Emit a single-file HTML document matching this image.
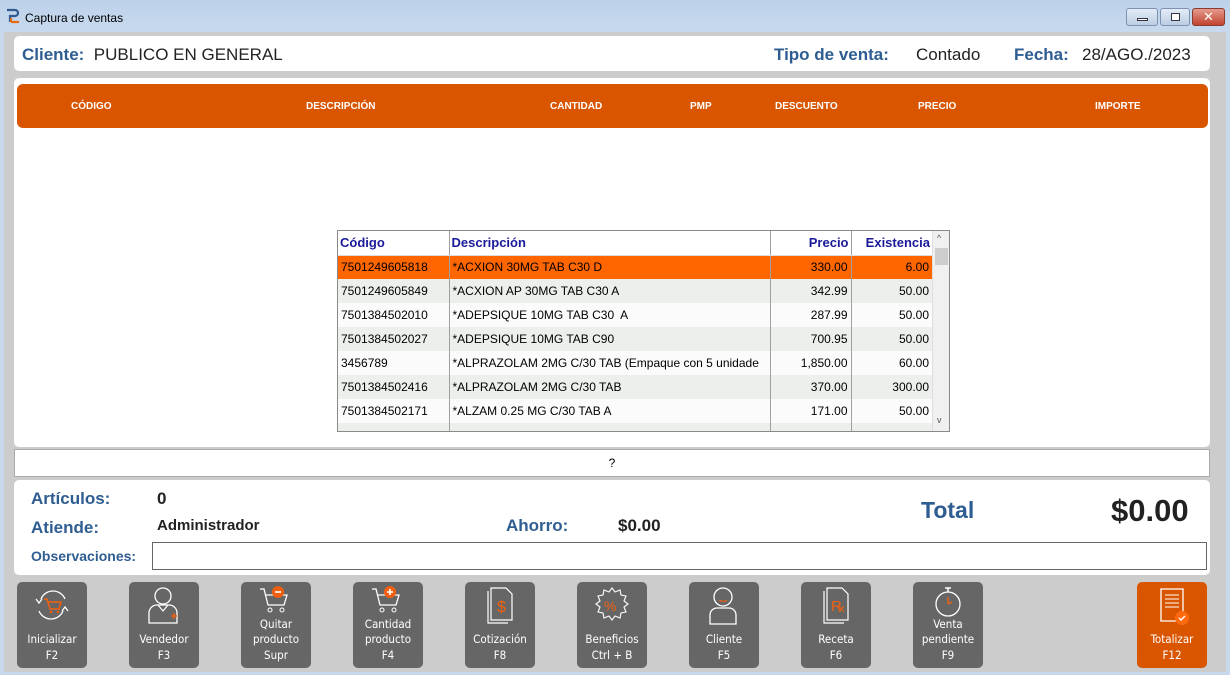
<!DOCTYPE html>
<html><head><meta charset="utf-8"><style>
*{margin:0;padding:0;box-sizing:border-box}
body{width:1230px;height:675px;overflow:hidden;background:#c9d9ec;font-family:"Liberation Sans","DejaVu Sans",sans-serif;position:relative}
.abs{position:absolute}
.title{left:0;top:0;width:1230px;height:36px;background:linear-gradient(#bcd2ea,#c9daee)}
.gray{left:4px;top:32px;width:1222px;height:640px;background:#cccccc}
.panel{background:#fff;border-radius:5px}
.lbl{color:#2e5d92;font-weight:bold}
.hdr{left:17px;top:84px;width:1191px;height:44px;background:#d95500;border-radius:6px;color:#fff;font-size:10px;font-weight:bold}
.hdr span{position:absolute;top:17px}
table{border-collapse:collapse;font-size:12px}
.tb{left:337px;top:230px;width:613px;height:202px;border:1px solid #8a8a8a;background:#ecefec;overflow:hidden}
.tb td{height:24px;padding:0 3px;border-left:1px solid #a0a0a0;white-space:nowrap;overflow:hidden}
.tb td:first-child{border-left:none}
.tb th{height:24px;color:#1a1a9a;font-size:13px;text-align:left;padding:0 2px;border-left:1px solid #a0a0a0;background:#fff;border-bottom:1px solid #ddd}
.tb th:first-child{border-left:none}
.tb .r{text-align:right}
.btn{position:absolute;top:582px;width:70px;height:86px;background:#666;border-radius:5px;color:#fff;font-family:"DejaVu Sans Condensed","Liberation Sans Narrow","Liberation Sans",sans-serif;font-size:11.5px;text-align:center}
.btn .t{position:absolute;left:0;right:0;bottom:5px;line-height:15.5px}
.btn svg{position:absolute;left:15px;top:3px}
</style></head><body>
<div class="abs title"></div>
<svg class="abs" style="left:5px;top:8px" width="16" height="16" viewBox="0 0 16 16"><path d="M2 2h8a3 3 0 0 1 0 6H5v6" fill="none" stroke="#2f5b91" stroke-width="2.2"/><path d="M6 14h8" stroke="#e86a10" stroke-width="2.2"/><path d="M6 10v4" stroke="#e86a10" stroke-width="2.2"/></svg>
<div class="abs" style="left:25px;top:11px;font-size:12px;color:#000">Captura de ventas</div>
<div class="abs" style="left:1126px;top:8px;width:32px;height:18px;border:1px solid #7c92b0;border-radius:3px;background:linear-gradient(#e3ecf7,#bccde3)"><div class="abs" style="left:10px;top:9px;width:11px;height:3px;background:#fff;border:1px solid #334"></div></div>
<div class="abs" style="left:1160px;top:8px;width:30px;height:18px;border:1px solid #7c92b0;border-radius:3px;background:linear-gradient(#e3ecf7,#bccde3)"><div class="abs" style="left:10px;top:4px;width:9px;height:8px;border:1px solid #334;background:#fff"></div></div>
<div class="abs" style="left:1192px;top:8px;width:33px;height:18px;border:1px solid #8b3a30;border-radius:3px;background:linear-gradient(#e59a8c,#c1432f);color:#fff;font-weight:bold;font-size:13px;text-align:center;line-height:16px">✕</div>
<div class="abs gray"></div>
<div class="abs panel" style="left:14px;top:36px;width:1196px;height:35px"></div>
<div class="abs" style="left:22px;top:45px;font-size:17px"><span class="lbl">Cliente:</span>&nbsp;&nbsp;<span style="color:#222">PUBLICO EN GENERAL</span></div>
<div class="abs lbl" style="left:774px;top:45px;font-size:17px">Tipo de venta:</div>
<div class="abs" style="left:916px;top:45px;font-size:17px;color:#222">Contado</div>
<div class="abs lbl" style="left:1014px;top:45px;font-size:17px">Fecha:</div>
<div class="abs" style="left:1082px;top:45px;font-size:17px;color:#222">28/AGO./2023</div>
<div class="abs panel" style="left:14px;top:78px;width:1196px;height:369px"></div>
<div class="abs hdr"><span style="left:54px">CÓDIGO</span><span style="left:289px">DESCRIPCIÓN</span><span style="left:533px">CANTIDAD</span><span style="left:673px">PMP</span><span style="left:758px">DESCUENTO</span><span style="left:901px">PRECIO</span><span style="left:1078px">IMPORTE</span></div>
<div class="abs tb">
<table style="width:594px;table-layout:fixed">
<colgroup><col style="width:111px"><col style="width:321px"><col style="width:81px"><col style="width:81px"></colgroup>
<tr><th>Código</th><th>Descripción</th><th class="r">Precio</th><th class="r">Existencia</th></tr>
<tr style="background:#ff6600"><td>7501249605818</td><td>*ACXION 30MG TAB C30 D</td><td class="r">330.00</td><td class="r">6.00</td></tr>
<tr style="background:#ecefec"><td>7501249605849</td><td>*ACXION AP 30MG TAB C30 A</td><td class="r">342.99</td><td class="r">50.00</td></tr>
<tr style="background:#fcfbfb"><td>7501384502010</td><td>*ADEPSIQUE 10MG TAB C30&nbsp; A</td><td class="r">287.99</td><td class="r">50.00</td></tr>
<tr style="background:#ecefec"><td>7501384502027</td><td>*ADEPSIQUE 10MG TAB C90</td><td class="r">700.95</td><td class="r">50.00</td></tr>
<tr style="background:#fcfbfb"><td>3456789</td><td>*ALPRAZOLAM 2MG C/30 TAB (Empaque con 5 unidade</td><td class="r">1,850.00</td><td class="r">60.00</td></tr>
<tr style="background:#ecefec"><td>7501384502416</td><td>*ALPRAZOLAM 2MG C/30 TAB</td><td class="r">370.00</td><td class="r">300.00</td></tr>
<tr style="background:#fcfbfb"><td>7501384502171</td><td>*ALZAM 0.25 MG C/30 TAB A</td><td class="r">171.00</td><td class="r">50.00</td></tr>
<tr style="background:#ecefec"><td></td><td></td><td></td><td></td></tr>
</table>
<div class="abs" style="left:594px;top:0;width:18px;height:200px;background:#f0f0f0;border-left:1px solid #ddd"><div class="abs" style="left:4px;top:2px;font-size:9px;color:#555">^</div><div class="abs" style="left:2px;top:17px;width:13px;height:17px;background:#cdcdcd"></div><div class="abs" style="left:4px;top:184px;font-size:9px;color:#555">v</div></div>
</div>
<div class="abs" style="left:14px;top:449px;width:1196px;height:28px;background:#fff;border:1px solid #aaa;font-size:12px;text-align:center;line-height:26px">?</div>
<div class="abs panel" style="left:14px;top:480px;width:1196px;height:95px"></div>
<div class="abs lbl" style="left:31px;top:489px;font-size:17px">Artículos:</div>
<div class="abs" style="left:157px;top:489px;font-size:17px;font-weight:bold;color:#222">0</div>
<div class="abs lbl" style="left:31px;top:518px;font-size:17px">Atiende:</div>
<div class="abs" style="left:157px;top:517px;font-size:15px;font-weight:bold;color:#222">Administrador</div>
<div class="abs lbl" style="left:506px;top:516px;font-size:17px">Ahorro:</div>
<div class="abs" style="left:618px;top:516px;font-size:17px;font-weight:bold;color:#222">$0.00</div>
<div class="abs lbl" style="left:921px;top:497px;font-size:23px">Total</div>
<div class="abs" style="left:1111px;top:493px;font-size:31px;font-weight:bold;color:#222">$0.00</div>
<div class="abs lbl" style="left:31px;top:548px;font-size:14px">Observaciones:</div>
<div class="abs" style="left:152px;top:542px;width:1055px;height:28px;border:1px solid #666;background:#fff"></div>

<div class="btn" style="left:17px"><svg width="40" height="40" viewBox="0 0 40 40" fill="none"><path d="M9 14a13 13 0 0 1 24 0M31 26a13 13 0 0 1-24 0" stroke="#fff" stroke-width="1.3"/><path d="M4 14l3 4 3-4M30 26l3-4 3 4" stroke="#fff" stroke-width="1.3"/><path d="M12 14h3l3 10h9l2-7H16" stroke="#f06010" stroke-width="1.5"/><circle cx="19" cy="27" r="1.3" fill="#f06010"/><circle cx="26" cy="27" r="1.3" fill="#f06010"/></svg><div class="t">Inicializar<br>F2</div></div>
<div class="btn" style="left:129px"><svg width="40" height="42" viewBox="0 0 40 42" fill="none"><circle cx="19" cy="11" r="8" stroke="#fff" stroke-width="1.3"/><path d="M5 38V28a8 8 0 0 1 8-8h12a8 8 0 0 1 8 8v10z" stroke="#fff" stroke-width="1.3"/><path d="M14 20l5 6 5-6" stroke="#fff" stroke-width="1.2"/><path d="M27 31h6M30 28v6" stroke="#f06010" stroke-width="1.4"/></svg><div class="t">Vendedor<br>F3</div></div>
<div class="btn" style="left:241px"><svg width="40" height="32" viewBox="0 0 40 32" fill="none"><path d="M4 4h4l4 16h16l3-10H10" stroke="#fff" stroke-width="1.3"/><circle cx="14" cy="25" r="2" stroke="#fff"/><circle cx="26" cy="25" r="2" stroke="#fff"/><circle cx="22" cy="7" r="6" fill="#f06010"/><path d="M19 7h6" stroke="#fff" stroke-width="1.6"/></svg><div class="t">Quitar<br>producto<br>Supr</div></div>
<div class="btn" style="left:353px"><svg width="40" height="32" viewBox="0 0 40 32" fill="none"><path d="M4 4h4l4 16h16l3-10H10" stroke="#fff" stroke-width="1.3"/><circle cx="14" cy="25" r="2" stroke="#fff"/><circle cx="26" cy="25" r="2" stroke="#fff"/><circle cx="22" cy="7" r="6" fill="#f06010"/><path d="M19 7h6M22 4v6" stroke="#fff" stroke-width="1.6"/></svg><div class="t">Cantidad<br>producto<br>F4</div></div>
<div class="btn" style="left:465px"><svg width="40" height="42" viewBox="0 0 40 42" fill="none"><path d="M8 6v32h20" stroke="#fff" stroke-width="1.2"/><path d="M11 3h15l6 6v26H11z" stroke="#fff" stroke-width="1.2"/><text x="17" y="27" font-size="16" fill="#f06010" font-family="Liberation Sans">$</text></svg><div class="t">Cotización<br>F8</div></div>
<div class="btn" style="left:577px"><svg width="40" height="42" viewBox="0 0 40 42" fill="none"><path d="M20 3l3 4 5-2 1 5 5 1-2 5 4 3-4 3 2 5-5 1-1 5-5-2-3 4-3-4-5 2-1-5-5-1 2-5-4-3 4-3-2-5 5-1 1-5 5 2z" stroke="#fff" stroke-width="1.1"/><text x="12" y="26" font-size="14" fill="#f06010" font-family="Liberation Sans">%</text></svg><div class="t">Beneficios<br>Ctrl + B</div></div>
<div class="btn" style="left:689px"><svg width="40" height="42" viewBox="0 0 40 42" fill="none"><circle cx="19" cy="12" r="9" stroke="#fff" stroke-width="1.3"/><path d="M15 15q4 3 8 0" stroke="#f06010" stroke-width="1.3"/><path d="M6 39V30a7 7 0 0 1 7-7h12a7 7 0 0 1 7 7v9z" stroke="#fff" stroke-width="1.3"/></svg><div class="t">Cliente<br>F5</div></div>
<div class="btn" style="left:801px"><svg width="40" height="42" viewBox="0 0 40 42" fill="none"><path d="M8 6v32h20" stroke="#fff" stroke-width="1.2"/><path d="M11 3h15l6 6v26H11z" stroke="#fff" stroke-width="1.2"/><text x="15" y="26" font-size="15" fill="#f06010" font-family="Liberation Sans">R</text><path d="M23 21l5 6M28 21l-5 6" stroke="#f06010"/></svg><div class="t">Receta<br>F6</div></div>
<div class="btn" style="left:913px"><svg width="40" height="34" viewBox="0 0 40 34" fill="none"><circle cx="20" cy="19" r="12" stroke="#fff" stroke-width="1.3"/><path d="M17 3h6M20 3v4" stroke="#fff" stroke-width="1.5"/><path d="M20 19v-7M20 19l4-2" stroke="#f06010" stroke-width="1.3"/></svg><div class="t">Venta<br>pendiente<br>F9</div></div>
<div class="btn" style="left:1137px;background:#d95500"><svg width="40" height="42" viewBox="0 0 40 42" fill="none"><path d="M9 4h22v32H9z" stroke="#fff" stroke-width="1.3"/><path d="M13 10h14M13 14h14M13 18h14M13 22h14" stroke="#fff"/><circle cx="30" cy="33" r="7" fill="#ff6a10"/><path d="M27 33l2 2 4-4" stroke="#fff" stroke-width="1.4"/></svg><div class="t">Totalizar<br>F12</div></div>
</body></html>
